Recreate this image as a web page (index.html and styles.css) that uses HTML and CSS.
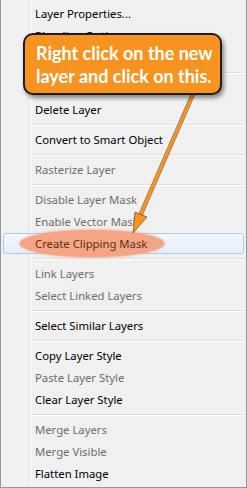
FILE: index.html
```html
<!DOCTYPE html>
<html>
<head>
  <meta charset="utf-8">
  <title>Layer context menu</title>
  <link rel="stylesheet" href="styles.css">
</head>
<body>
  <div class="menu">
    <div class="item">Layer Properties...</div>
    <div class="item">Blending Options...</div>
    <div class="item">Edit Adjustment...</div>
    <div class="sep"></div>
    <div class="item">Duplicate Layer...</div>
    <div class="item">Delete Layer</div>
    <div class="sep"></div>
    <div class="item">Convert to Smart Object</div>
    <div class="sep"></div>
    <div class="item off">Rasterize Layer</div>
    <div class="sep"></div>
    <div class="item off">Disable Layer Mask</div>
    <div class="item off">Enable Vector Mask</div>
    <div class="item hot">
      <span class="glow"></span>
      <span class="label">Create Clipping Mask</span>
    </div>
    <div class="sep"></div>
    <div class="item off">Link Layers</div>
    <div class="item off">Select Linked Layers</div>
    <div class="sep"></div>
    <div class="item">Select Similar Layers</div>
    <div class="sep"></div>
    <div class="item">Copy Layer Style</div>
    <div class="item off">Paste Layer Style</div>
    <div class="item">Clear Layer Style</div>
    <div class="sep"></div>
    <div class="item off">Merge Layers</div>
    <div class="item off">Merge Visible</div>
    <div class="item">Flatten Image</div>
  </div>

  <svg class="arrow" width="247" height="488" viewBox="0 0 247 488">
    <line x1="193" y1="94" x2="140" y2="216" stroke="rgba(80,40,0,0.55)" stroke-width="4.5"/>
    <line x1="193" y1="94" x2="140" y2="216" stroke="#f7931e" stroke-width="3"/>
    <polygon points="133,233 135,212 147,217" fill="#f7931e" stroke="rgba(80,40,0,0.55)" stroke-width="1"/>
  </svg>

  <div class="callout">Right click on the new<br>layer and click on this.</div>
</body>
</html>
```

FILE: styles.css
```css
body {
  margin: 0;
  width: 247px;
  height: 488px;
  overflow: hidden;
  font-family: "Noto Sans", "Open Sans", sans-serif;
}

.menu {
  box-sizing: border-box;
  width: 247px;
  height: 488px;
  padding: 3px 2px 2px 2px;
  border: 1px solid #979797;
  border-top: none;
  background:
    linear-gradient(to right,
      transparent 28px, #e2e3e3 28px, #e2e3e3 29px,
      #ffffff 29px, #ffffff 30px, transparent 30px),
    #f0f0f0;
}

.item {
  position: relative;
  height: 22px;
  line-height: 22px;
  padding-left: 32px;
  font-size: 11.3px;
  color: #000;
  white-space: nowrap;
}

.item.off {
  color: #6d6d6d;
}

.item.hot {
  box-sizing: border-box;
  height: 21px;
  margin-bottom: 1px;
  line-height: 20px;
  padding-left: 31px;
  border: 1px solid #aecbf0;
  border-radius: 3px;
  background: linear-gradient(#f2f7fd, #e5eefa);
}

.item.hot .label {
  position: relative;
  color: #5a3020;
}

.glow {
  position: absolute;
  left: 16px;
  top: -4px;
  width: 144px;
  height: 27px;
  border-radius: 50%;
  background: #f5a584;
  box-shadow: 0 0 2px 1px rgba(245, 165, 132, 0.7);
}

.sep {
  height: 8px;
  margin-left: 28px;
  background: linear-gradient(transparent 3px, #e0e0e0 3px, #e0e0e0 4px,
    #ffffff 4px, #ffffff 5px, transparent 5px);
}

.arrow {
  position: absolute;
  left: 0;
  top: 0;
  pointer-events: none;
}

.callout {
  position: absolute;
  left: 23px;
  top: 33px;
  box-sizing: border-box;
  width: 199px;
  height: 62px;
  padding: 7px 0 0 11px;
  border: 2px solid #1c1c1c;
  border-radius: 10px;
  background: #f7931e;
  box-shadow: 2px 3px 4px rgba(0, 0, 0, 0.45);
  color: #fff;
  font-family: Lato, sans-serif;
  font-weight: bold;
  font-size: 18px;
  line-height: 23px;
  white-space: nowrap;
}
```
